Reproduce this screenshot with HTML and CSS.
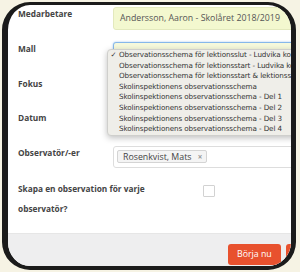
FILE: index.html
```html
<!DOCTYPE html>
<html lang="sv">
<head>
    <meta charset="UTF-8">
    <meta name="viewport" content="width=device-width, initial-scale=1.0">
    <title>Ny observation</title>
    <link rel="stylesheet" href="styles.css">
</head>
<body>
    <div class="frame">
        <div class="page">
            <div class="form">
                <div class="row">
                    <div class="label">Medarbetare</div>
                    <div class="field input readonly">Andersson, Aaron - Skolåret 2018/2019</div>
                </div>
                <div class="row">
                    <div class="label">Mall</div>
                    <div class="field input focused"></div>
                </div>
                <div class="row">
                    <div class="label">Fokus</div>
                    <div class="field input"></div>
                </div>
                <div class="row">
                    <div class="label">Datum</div>
                    <div class="field input"></div>
                </div>
                <div class="row">
                    <div class="label">Observatör/-er</div>
                    <div class="field input tags">
                        <span class="tag">Rosenkvist, Mats <span class="tag-remove">×</span></span>
                    </div>
                </div>
                <div class="row row-tall">
                    <div class="label label-wrap">Skapa en observation för varje observatör?</div>
                    <div class="field">
                        <span class="checkbox"></span>
                    </div>
                </div>
            </div>
            <div class="footer">
                <button class="btn">Börja nu</button>
                <button class="btn">Avbryt</button>
            </div>
        </div>

        <ul class="select-menu">
            <li class="selected"><span class="check">✓</span>Observationsschema för lektionsslut - Ludvika kommun</li>
            <li><span class="check"></span>Observationsschema för lektionsstart - Ludvika kommun</li>
            <li><span class="check"></span>Observationsschema för lektionsstart &amp; lektionsslut</li>
            <li><span class="check"></span>Skolinspektionens observationsschema</li>
            <li><span class="check"></span>Skolinspektionens observationsschema - Del 1</li>
            <li><span class="check"></span>Skolinspektionens observationsschema - Del 2</li>
            <li><span class="check"></span>Skolinspektionens observationsschema - Del 3</li>
            <li><span class="check"></span>Skolinspektionens observationsschema - Del 4</li>
        </ul>
    </div>
</body>
</html>
```

FILE: styles.css
```css
body {
    margin: 0;
    background: #f6f3e4;
    font-family: "Open Sans", Arial, sans-serif;
    color: #444;
}

.frame {
    position: relative;
    box-sizing: border-box;
    width: 294px;
    height: 268px;
    margin: 2px 0 0 2px;
    border: solid #1b1b1b;
    border-width: 3px 5px 4px 6px;
    border-radius: 28px;
    background: #fff;
    overflow: hidden;
}

.page {
    width: 340px;
}

.form {
    padding: 0 0 4.5px 10px;
}

.row {
    display: flex;
    align-items: flex-start;
    height: 25px;
    margin-bottom: 9.75px;
}

.row-tall {
    height: 40px;
}

.label {
    flex: 0 0 95px;
    font-size: 8.3px;
    font-weight: bold;
    line-height: 18px;
    color: #444;
}

.label-wrap {
    flex-basis: 132px;
    line-height: 20px;
}

.field {
    flex: 1;
    margin-top: 2px;
}

.input {
    box-sizing: border-box;
    height: 23px;
    padding: 0 6px;
    border: 1px solid #ddd;
    border-radius: 3px;
    background: #fff;
    font-size: 8.8px;
    line-height: 21px;
    color: #555;
}

.readonly {
    background: #f3f8cf;
    border-color: #e3e9bd;
}

.focused {
    background: #f6f9dc;
    border-color: #86b7ea;
    box-shadow: 0 0 2px rgba(80, 150, 230, 0.6);
}

.tags {
    height: 22px;
    padding: 3px;
    line-height: 13px;
}

.tag {
    display: inline-block;
    box-sizing: border-box;
    height: 13px;
    padding: 0 4px 0 5px;
    border: 1px solid #d4d4d4;
    border-radius: 2px;
    background: #f4f4f4;
    line-height: 11px;
    color: #444;
}

.tag-remove {
    margin-left: 4px;
    font-size: 8px;
    font-weight: bold;
    color: #9a9a9a;
}

.checkbox {
    display: block;
    width: 10px;
    height: 10px;
    margin: 4px 0 0 53px;
    border: 1px solid #d2d2d2;
    border-radius: 1px;
    background: #fff;
}

.footer {
    display: flex;
    gap: 5px;
    padding: 10px 0 12px 220px;
    background: #eeeeef;
    border-top: 1px solid #e6e6e6;
}

.btn {
    height: 21px;
    padding: 0 9px;
    border: none;
    border-radius: 3px;
    background: #e8512e;
    color: #fff;
    font-family: "Open Sans", Arial, sans-serif;
    font-size: 8.8px;
    line-height: 21px;
}

/* native select popup */
.select-menu {
    position: absolute;
    left: 99px;
    top: 44px;
    width: 220px;
    margin: 0;
    padding: 0;
    list-style: none;
    background: #efeee9;
    border: 1px solid #cfcfcc;
    border-radius: 4px;
    box-shadow: 0 2px 6px rgba(0, 0, 0, 0.25);
    font-family: "DejaVu Sans", Verdana, sans-serif;
    font-size: 7.2px;
    letter-spacing: -0.1px;
    color: #333;
}

.select-menu li {
    height: 10.6px;
    line-height: 10.6px;
    white-space: nowrap;
    overflow: hidden;
}

.check {
    display: inline-block;
    width: 11px;
    text-align: center;
}
```
